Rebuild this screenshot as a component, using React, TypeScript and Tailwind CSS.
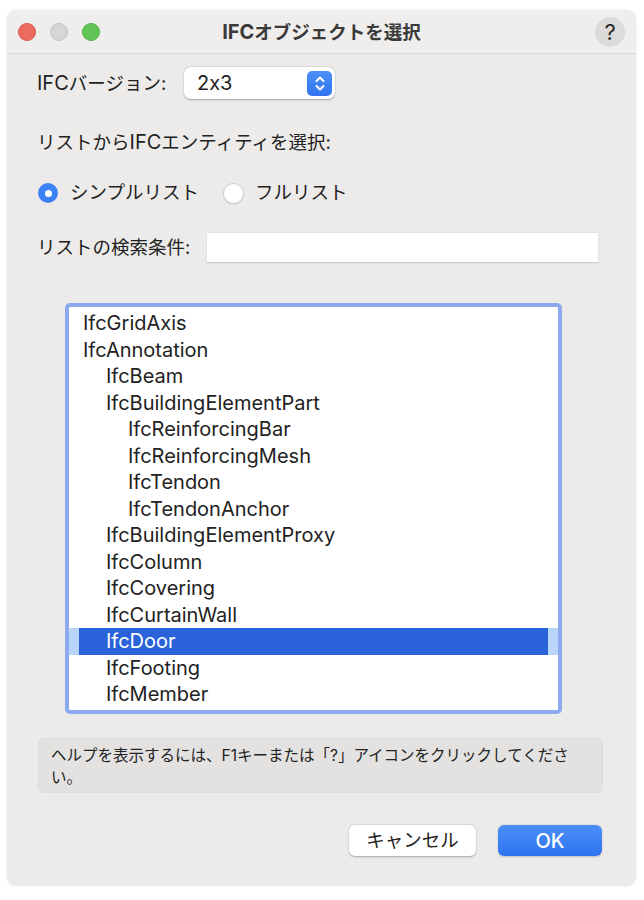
import React from 'react';

const font = { fontFamily: 'Inter, "Noto Sans CJK JP", sans-serif', fontFeatureSettings: '"calt" 0' };

const items: { name: string; level: number }[] = [
  { name: 'IfcGridAxis', level: 0 },
  { name: 'IfcAnnotation', level: 0 },
  { name: 'IfcBeam', level: 1 },
  { name: 'IfcBuildingElementPart', level: 1 },
  { name: 'IfcReinforcingBar', level: 2 },
  { name: 'IfcReinforcingMesh', level: 2 },
  { name: 'IfcTendon', level: 2 },
  { name: 'IfcTendonAnchor', level: 2 },
  { name: 'IfcBuildingElementProxy', level: 1 },
  { name: 'IfcColumn', level: 1 },
  { name: 'IfcCovering', level: 1 },
  { name: 'IfcCurtainWall', level: 1 },
  { name: 'IfcDoor', level: 1 },
  { name: 'IfcFooting', level: 1 },
  { name: 'IfcMember', level: 1 },
];

const indent = ['pl-[14px]', 'pl-[37px]', 'pl-[59px]'];

// latin runs are set a bit larger than the kana/kanji, like SF + Hiragino
const L = ({ children }: { children: React.ReactNode }) => <span className="text-[20px]">{children}</span>;

const App = () => {
  return (
    <div className="min-h-[900px] bg-white pt-[10px] pl-[7px]" style={font}>
      <div className="w-[629px] h-[876px] rounded-[10px] bg-[#ecebea] shadow-[0_0_2px_rgba(0,0,0,0.15)] flex flex-col overflow-hidden text-[#222] text-[18.5px]">
        {/* title bar */}
        <div className="h-[44px] shrink-0 bg-[#efeeed] border-b border-[#d8d7d6] grid grid-cols-[1fr_auto_1fr] items-center px-[11px]">
          <div className="flex items-center gap-[14px]">
            <span className="w-[18px] h-[18px] rounded-full bg-[#ec6a5e] border border-[#d6574c]" />
            <span className="w-[18px] h-[18px] rounded-full bg-[#d6d5d4] border border-[#c4c3c2]" />
            <span className="w-[18px] h-[18px] rounded-full bg-[#61c454] border border-[#52ad46]" />
          </div>
          <div className="font-bold text-[#3a3a3a]">
            <L>IFC</L>オブジェクトを選択
          </div>
          <div className="flex justify-end">
            <div className="w-[30px] h-[30px] rounded-full bg-[#dcdbda] flex items-center justify-center text-[22px] text-[#2a2a2a] leading-none">?</div>
          </div>
        </div>

        {/* body */}
        <div className="flex flex-col pl-[30px] pr-[34px]">
          <div className="flex items-center mt-[13px] h-[32px]">
            <span className="w-[147px]">
              <L>IFC</L>バージョン:
            </span>
            <div className="w-[151px] h-[32px] bg-white rounded-[7px] shadow-[0_0.5px_2px_rgba(0,0,0,0.3)] flex items-center justify-between pl-[13px] pr-[3px]">
              <span className="text-[20px]">2x3</span>
              <div className="w-[25px] h-[25px] rounded-[5px] bg-gradient-to-b from-[#4b8ff8] to-[#2f74ee] flex items-center justify-center">
                <svg width="12" height="17" viewBox="0 0 12 17" fill="none" stroke="white" strokeWidth="2" strokeLinecap="round" strokeLinejoin="round">
                  <path d="M2.5 6 L6 2.5 L9.5 6" />
                  <path d="M2.5 11 L6 14.5 L9.5 11" />
                </svg>
              </div>
            </div>
          </div>

          <div className="mt-[31px] leading-[24px]">
            リストから<L>IFC</L>エンティティを選択:
          </div>

          <div className="flex items-center mt-[28px] h-[22px]">
            <div className="w-[186px] flex items-center">
              <div className="w-[20px] h-[20px] rounded-full bg-[#3b82f6] flex items-center justify-center ml-[1px]">
                <span className="w-[7px] h-[7px] rounded-full bg-white" />
              </div>
              <span className="ml-[12px]">シンプルリスト</span>
            </div>
            <div className="w-[21px] h-[21px] rounded-full bg-white border border-[#d0d0d0] shadow-[0_0.5px_1px_rgba(0,0,0,0.15)]" />
            <span className="ml-[11px]">フルリスト</span>
          </div>

          <div className="flex items-center mt-[29px]">
            <span className="w-[170px]">リストの検索条件:</span>
            <div className="w-[391px] h-[30px] bg-white border-b border-[#c9c9c9] shadow-[0_0_1px_rgba(0,0,0,0.2)]" />
          </div>

          <div className="mt-[40px] ml-[28px] w-[497px] h-[411px] rounded-[5px] border-[4px] border-[#8eaaef] bg-white overflow-hidden">
            <div className="pt-[3px] text-[20px]">
              {items.map((it) =>
                it.name === 'IfcDoor' ? (
                  <div key={it.name} className="h-[26.5px] bg-[#b9d5f9] px-[10px] flex">
                    <div className="flex-1 bg-[#2a62d9] text-white leading-[26.5px] pl-[27px]">{it.name}</div>
                  </div>
                ) : (
                  <div key={it.name} className={`h-[26.5px] leading-[26.5px] ${indent[it.level]}`}>
                    {it.name}
                  </div>
                )
              )}
            </div>
          </div>

          <div className="mt-[24px] ml-[1px] w-[565px] h-[55px] rounded-[6px] bg-[#e3e2e1] border border-[#dddcdb] px-[12px] pt-[6px] text-[15.5px] leading-[22px] text-[#222]">
            <div className="whitespace-nowrap">ヘルプを表示するには、F1キーまたは「?」アイコンをクリックしてくださ</div>
            <div>い。</div>
          </div>

          <div className="flex justify-end gap-[22px] mt-[32px]">
            <div className="w-[127px] h-[31px] rounded-[6px] bg-white shadow-[0_0.5px_2px_rgba(0,0,0,0.3)] flex items-center justify-center">キャンセル</div>
            <div className="w-[104px] h-[31px] rounded-[6px] bg-gradient-to-b from-[#4b8ff8] to-[#2f74ee] shadow-[0_0.5px_2px_rgba(0,0,0,0.2)] flex items-center justify-center text-[20px] text-white font-medium">OK</div>
          </div>
        </div>
      </div>
    </div>
  );
};

export default App;
